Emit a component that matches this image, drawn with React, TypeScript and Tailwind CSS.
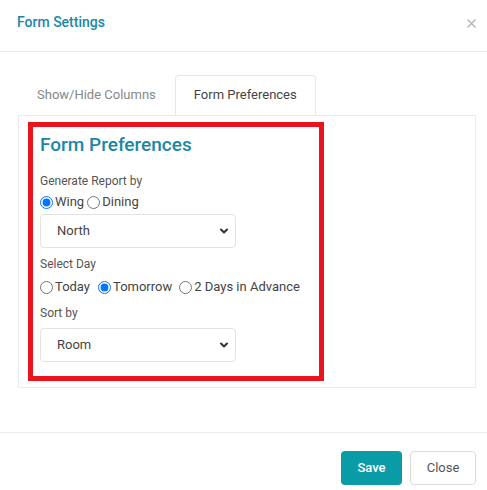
import { useState } from "react";

type Tab = "columns" | "preferences";

function Radio({
  name,
  label,
  checked,
  onChange,
  className = ""
}: {
  name: string;
  label: string;
  checked: boolean;
  onChange: () => void;
  className?: string;
}) {
  return (
    <label className={`inline-flex items-center ${className}`}>
      <input
        type="radio"
        name={name}
        checked={checked}
        onChange={onChange}
        className="m-0 mr-[2px] h-[13px] w-[13px] accent-[#0075ff]"
      />
      <span>{label}</span>
    </label>
  );
}

function Select({ value, options, onChange }: { value: string; options: string[]; onChange: (v: string) => void }) {
  return (
    <div className="relative w-[196px]">
      <select
        value={value}
        onChange={(event) => onChange(event.target.value)}
        className="h-[34px] w-full appearance-none rounded-[4px] border border-[#e2e2e2] bg-white pl-[16px] text-[13px] text-[#444] outline-none"
      >
        {options.map((option) => (
          <option key={option}>{option}</option>
        ))}
      </select>
      <svg
        className="pointer-events-none absolute right-[7px] top-1/2 h-[10px] w-[10px] -translate-y-1/2"
        viewBox="0 0 10 10"
        fill="none"
        stroke="#333"
        strokeWidth="2"
        strokeLinecap="round"
        strokeLinejoin="round"
      >
        <path d="M2 3.5 5 6.5 8 3.5" />
      </svg>
    </div>
  );
}

export default function App() {
  const [tab, setTab] = useState<Tab>("preferences");
  const [reportBy, setReportBy] = useState("wing");
  const [day, setDay] = useState("tomorrow");
  const [wing, setWing] = useState("North");
  const [sort, setSort] = useState("Room");

  return (
    <div className="flex h-[490px] w-full flex-col bg-white font-['Roboto',sans-serif] text-[#444]">
      <header className="flex h-[52px] items-start justify-between border-b border-[#ebebeb] pl-[17px] pr-[11px] pt-[12px]">
        <h1 className="text-[14px] font-medium leading-[20px] text-[#1b87a6]">Form Settings</h1>
        <button type="button" className="mt-[7px] text-[#b0b0b0]" aria-label="Close">
          <svg width="9" height="9" viewBox="0 0 9 9" stroke="currentColor" strokeWidth="1.2">
            <path d="M0.5 0.5 8.5 8.5M8.5 0.5 0.5 8.5" />
          </svg>
        </button>
      </header>

      <main className="flex-1 pl-[18px] pr-[11px] pt-[23px]">
        <div className="flex">
          <button
            type="button"
            onClick={() => setTab("columns")}
            className={`h-[40px] px-[19px] text-[13px] ${
              tab === "columns"
                ? "relative -mb-px rounded-t-[4px] border border-b-white border-[#e6e6e6] bg-white text-[#444]"
                : "text-[#888]"
            }`}
          >
            Show/Hide Columns
          </button>
          <button
            type="button"
            onClick={() => setTab("preferences")}
            className={`h-[40px] px-[18px] text-[13px] ${
              tab === "preferences"
                ? "relative -mb-px rounded-t-[4px] border border-[#e6e6e6] border-b-white bg-white text-[#444]"
                : "text-[#888]"
            }`}
          >
            Form Preferences
          </button>
        </div>

        <section className="h-[273px] border border-[#ebebeb] pb-[7px] pl-[9px] pt-[6px]">
          {tab === "preferences" ? (
            <div className="h-[259px] w-[296px] border-[5px] border-[#e8141e] pl-[7px] pt-[7px]">
              <h2 className="text-[19px] font-medium leading-[22px] text-[#1b87a6]">Form Preferences</h2>

              <p className="mt-[17px] text-[12px] leading-[16px] text-[#555]">Generate Report by</p>
              <div className="mt-[4px] flex items-center text-[13px] leading-[18px] text-[#444]">
                <Radio name="report" label="Wing" checked={reportBy === "wing"} onChange={() => setReportBy("wing")} />
                <Radio
                  name="report"
                  label="Dining"
                  className="ml-[3px]"
                  checked={reportBy === "dining"}
                  onChange={() => setReportBy("dining")}
                />
              </div>
              <div className="mt-[3px]">
                <Select value={wing} options={["North", "South", "East", "West"]} onChange={setWing} />
              </div>

              <p className="mt-[8px] text-[12px] leading-[16px] text-[#555]">Select Day</p>
              <div className="mt-[6px] flex items-center text-[13px] leading-[18px] text-[#444]">
                <Radio name="day" label="Today" checked={day === "today"} onChange={() => setDay("today")} />
                <Radio
                  name="day"
                  label="Tomorrow"
                  className="ml-[8px]"
                  checked={day === "tomorrow"}
                  onChange={() => setDay("tomorrow")}
                />
                <Radio
                  name="day"
                  label="2 Days in Advance"
                  className="ml-[7px]"
                  checked={day === "advance"}
                  onChange={() => setDay("advance")}
                />
              </div>

              <p className="mt-[9px] text-[12px] leading-[16px] text-[#555]">Sort by</p>
              <div className="mt-[7px]">
                <Select value={sort} options={["Room", "Name", "Wing"]} onChange={setSort} />
              </div>
            </div>
          ) : (
            <div className="p-3 text-[13px] text-[#666]">Columns</div>
          )}
        </section>
      </main>

      <footer className="flex h-[58px] items-start justify-end gap-[8px] border-t border-[#ebebeb] pr-[11px] pt-[18px]">
        <button
          type="button"
          className="h-[34px] w-[61px] rounded-[4px] bg-[#0a9ca6] text-[13px] font-medium text-white"
        >
          Save
        </button>
        <button
          type="button"
          className="h-[34px] w-[66px] rounded-[4px] border border-[#dcdcdc] bg-white text-[13px] text-[#555]"
        >
          Close
        </button>
      </footer>
    </div>
  );
}
